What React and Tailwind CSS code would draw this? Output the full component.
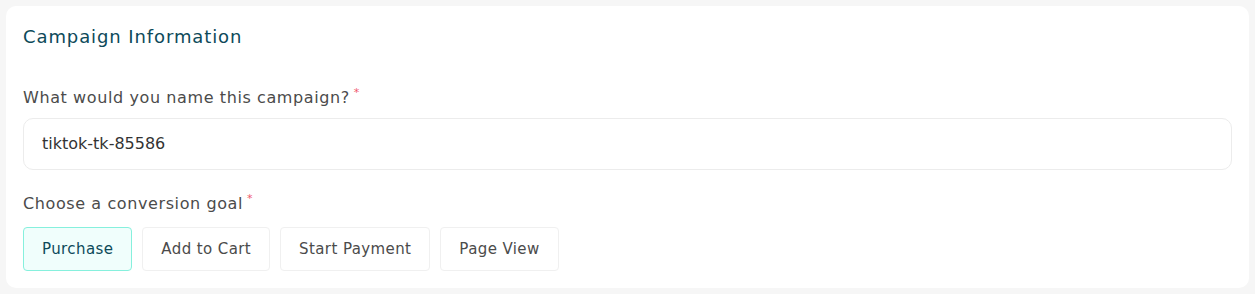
import React, { useState } from "react";

const goals = ["Purchase", "Add to Cart", "Start Payment", "Page View"];

export default function App() {
	const [goal, setGoal] = useState("Purchase");

	return (
		<div
			className="min-h-[294px] bg-[#f6f6f6] p-[6px]"
			style={{ fontFamily: '"DejaVu Sans", sans-serif' }}
		>
			<div className="rounded-[10px] bg-white px-[17px] pt-[19px] pb-[17px]">
				<p className="text-[18px] leading-[24px] tracking-[0.9px] text-[#0d4a5a]">
					Campaign Information
				</p>

				<label className="mt-[38px] block h-[22px] text-[16px] leading-[22px] tracking-[0.6px] text-[#4b4b4b]">
					What would you name this campaign?
					<span className="ml-[4px] align-top text-[11px] leading-[12px] text-[#f0576b]">*</span>
				</label>
				<div className="mt-[9px] flex h-[52px] items-center rounded-[10px] border border-[#ececec] px-[18px]">
					<span className="text-[16px] text-[#333]">tiktok-tk-85586</span>
				</div>

				<label className="mt-[23px] block h-[22px] text-[16px] leading-[22px] tracking-[0.6px] text-[#4b4b4b]">
					Choose a conversion goal
					<span className="ml-[4px] align-top text-[11px] leading-[12px] text-[#f0576b]">*</span>
				</label>
				<div className="mt-[12px] flex gap-[10px]">
					{goals.map((g) => (
						<button
							key={g}
							onClick={() => setGoal(g)}
							className={`h-[44px] rounded-[4px] border px-[18px] text-[15px] tracking-[0.4px] ${
								goal === g
									? "border-[#86f0dd] bg-[#f0fefc] text-[#0d4a5a]"
									: "border-[#f0f0f0] bg-white text-[#4b4b4b]"
							}`}
						>
							{g}
						</button>
					))}
				</div>
			</div>
		</div>
	);
}
